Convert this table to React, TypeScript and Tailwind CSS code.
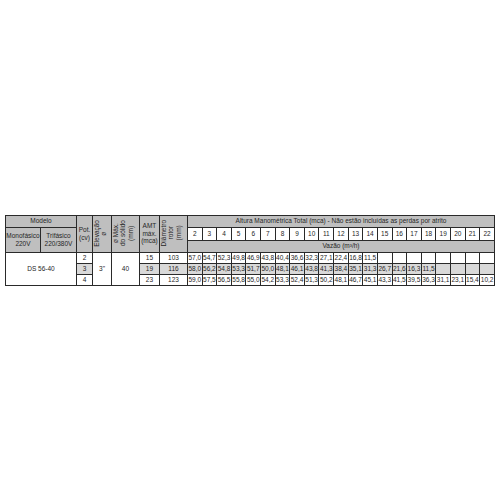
import React from "react";

const nums = Array.from({ length: 21 }, (_, i) => String(i + 2));

const rows: { pot: string; amt: string; diam: string; vals: string[]; grey: boolean }[] = [
  {
    pot: "2",
    amt: "15",
    diam: "103",
    vals: ["57,0", "54,7", "52,3", "49,8", "46,9", "43,8", "40,4", "36,6", "32,3", "27,1", "22,4", "16,8", "11,5"],
    grey: false,
  },
  {
    pot: "3",
    amt: "19",
    diam: "116",
    vals: ["58,0", "56,2", "54,8", "53,3", "51,7", "50,0", "48,1", "46,1", "43,8", "41,3", "38,4", "35,1", "31,3", "26,7", "21,6", "16,3", "11,5"],
    grey: true,
  },
  {
    pot: "4",
    amt: "23",
    diam: "123",
    vals: ["59,0", "57,5", "56,5", "55,8", "55,0", "54,2", "53,3", "52,4", "51,3", "50,2", "48,1", "46,7", "45,1", "43,3", "41,5", "39,5", "36,3", "31,1", "23,1", "15,4", "10,2"],
    grey: false,
  },
];

const cell = "border border-[#2a2a2a] p-0 text-center align-middle leading-[1.15]";
const hdr = cell + " bg-[#bfbfbf] font-normal";

export default function App() {
  return (
    <div className="flex h-[500px] w-[500px] items-center justify-center bg-white font-['Liberation_Sans',Arial,sans-serif] text-[#262626]">
      <table className="w-[489px] table-fixed border-collapse border border-[#1f1f1f] text-[6.5px]">
        <colgroup>
          <col className="w-[35px]" />
          <col className="w-[36px]" />
          <col className="w-[16px]" />
          <col className="w-[19px]" />
          <col className="w-[28px]" />
          <col className="w-[20px]" />
          <col className="w-[28px]" />
          {nums.map((n) => (
            <col key={n} className="w-[14.62px]" />
          ))}
        </colgroup>
        <thead>
          <tr className="h-[12px]">
            <th colSpan={2} className={hdr}>
              Modelo
            </th>
            <th rowSpan={3} className={hdr}>
              Pot.
              <br />
              (cv)
            </th>
            <th rowSpan={3} className={hdr}>
              <div className="mx-auto rotate-180 [writing-mode:vertical-rl]">
                Elevação
                <br />ø
              </div>
            </th>
            <th rowSpan={3} className={hdr}>
              <div className="mx-auto rotate-180 [writing-mode:vertical-rl]">
                ø Máx.
                <br />
                do sólido
                <br />
                (mm)
              </div>
            </th>
            <th rowSpan={3} className={hdr}>
              AMT
              <br />
              máx.
              <br />
              (mca)
            </th>
            <th rowSpan={3} className={hdr}>
              <div className="mx-auto rotate-180 [writing-mode:vertical-rl]">
                Diâmetro
                <br />
                rotor
                <br />
                (mm)
              </div>
            </th>
            <th colSpan={21} className={hdr + " text-[6.5px]"}>
              Altura Manométrica Total (mca) - Não estão incluídas as perdas por atrito
            </th>
          </tr>
          <tr className="h-[13px]">
            <th rowSpan={2} className={hdr}>
              Monofásico
              <br />
              220V
            </th>
            <th rowSpan={2} className={hdr}>
              Trifásico
              <br />
              220/380V
            </th>
            {nums.map((n) => (
              <th key={n} className={cell + " bg-white font-normal"}>
                {n}
              </th>
            ))}
          </tr>
          <tr className="h-[12px]">
            <th colSpan={21} className={hdr}>
              Vazão (m³/h)
            </th>
          </tr>
        </thead>
        <tbody>
          {rows.map((r, i) => {
            const bg = r.grey ? " bg-[#d9d9d9]" : " bg-white";
            return (
              <tr key={i} className="h-[11px]">
                {i === 0 && (
                  <td colSpan={2} rowSpan={3} className={cell + " bg-white"}>
                    DS 56-40
                  </td>
                )}
                <td className={cell + bg}>{r.pot}</td>
                {i === 0 && (
                  <>
                    <td rowSpan={3} className={cell + " bg-white"}>
                      3"
                    </td>
                    <td rowSpan={3} className={cell + " bg-white"}>
                      40
                    </td>
                  </>
                )}
                <td className={cell + bg}>{r.amt}</td>
                <td className={cell + bg}>{r.diam}</td>
                {nums.map((n, j) => (
                  <td key={n} className={cell + bg + " whitespace-nowrap overflow-hidden"}>
                    {r.vals[j] ?? ""}
                  </td>
                ))}
              </tr>
            );
          })}
        </tbody>
      </table>
    </div>
  );
}
